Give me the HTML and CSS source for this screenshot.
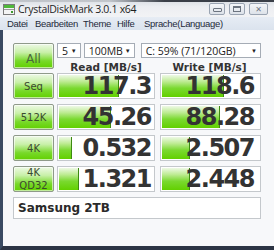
FILE: index.html
```html
<!DOCTYPE html>
<html>
<head>
<meta charset="utf-8">
<link rel="stylesheet" href="styles.css">
</head>
<body>
<div class="window">
  <div class="titlebar">
    <svg class="appicon" width="12" height="11" viewBox="0 0 12 11">
      <rect x="0.5" y="0.5" width="11" height="10" fill="#f4f4f4" stroke="#7a7a7a"/>
      <rect x="1" y="1" width="10" height="3" fill="#4fb83a"/>
      <rect x="1" y="5" width="10" height="1" fill="#9a9a9a"/>
      <rect x="8" y="7" width="2" height="2" fill="#3c9a2c"/>
    </svg>
    <span class="title">CrystalDiskMark 3.0.1 x64</span>
    <div class="controls">
      <div class="cbtn"><span class="min"></span></div>
      <div class="cbtn"><span class="max"></span></div>
      <div class="cbtn close"><span class="x">✕</span></div>
    </div>
  </div>
  <div class="menubar">
    <span class="mi m1">Datei</span>
    <span class="mi m2">Bearbeiten</span>
    <span class="mi m3">Theme</span>
    <span class="mi m4">Hilfe</span>
    <span class="mi">Sprache(Language)</span>
  </div>
  <div class="client">
    <div class="grid">
      <div class="btn all">All</div>
      <div class="combos">
        <div class="combo c1"><span>5</span><i>▼</i></div>
        <div class="combo c2"><span>100MB</span><i>▼</i></div>
        <div class="combo c3"><span>C: 59% (71/120GB)</span><i>▼</i></div>
      </div>
      <div class="head">Read [MB/s]</div>
      <div class="head">Write [MB/s]</div>

      <div class="btn">Seq</div>
      <div class="cell"><div class="bar" style="width:62%"></div><span class="val">117.3</span></div>
      <div class="cell w"><div class="bar" style="width:63%"></div><span class="val">118.6</span></div>

      <div class="btn">512K</div>
      <div class="cell"><div class="bar" style="width:54%"></div><span class="val">45.26</span></div>
      <div class="cell w"><div class="bar" style="width:59%"></div><span class="val">88.28</span></div>

      <div class="btn">4K</div>
      <div class="cell"><div class="bar" style="width:14%"></div><span class="val">0.532</span></div>
      <div class="cell w"><div class="bar" style="width:28%"></div><span class="val">2.507</span></div>

      <div class="btn two">4K<br>QD32</div>
      <div class="cell"><div class="bar" style="width:21%"></div><span class="val">1.321</span></div>
      <div class="cell w"><div class="bar" style="width:28%"></div><span class="val">2.448</span></div>

      <div class="comment">Samsung 2TB</div>
    </div>
  </div>
</div>
</body>
</html>
```

FILE: styles.css
```css
html, body {
  margin: 0;
  padding: 0;
  width: 274px;
  height: 250px;
  overflow: hidden;
}
.window {
  width: 274px;
  height: 250px;
  display: flex;
  flex-direction: column;
  background: #eef2f7;
  font-family: "Open Sans", "DejaVu Sans", sans-serif;
}
.titlebar {
  height: 17px;
  flex: none;
  display: flex;
  align-items: center;
  background:
    linear-gradient(to right, rgba(40,44,52,0.15) 0%, rgba(40,44,52,0.15) 40%, #3a3f48 60%) top / 100% 2px no-repeat,
    linear-gradient(#d9dde3, #eceef2 40%, #f2f3f5);
  box-sizing: border-box;
  padding-left: 3px;
}
.appicon { flex: none; margin-top: 1px; }
.title {
  margin-left: 3px;
  font-size: 10.5px;
  color: #1e1e1e;
  letter-spacing: -0.3px;
  white-space: nowrap;
}
.controls {
  margin-left: auto;
  margin-right: 6px;
  display: flex;
  gap: 4px;
  align-self: flex-start;
  margin-top: 3px;
}
.cbtn {
  box-sizing: border-box;
  width: 16px;
  height: 12px;
  border: 1px solid #9aa4b2;
  border-radius: 2px;
  background: linear-gradient(#f4f6f9, #dde2e9);
  display: flex;
  align-items: center;
  justify-content: center;
}
.cbtn.close { width: 19px; }
.min { width: 7px; height: 2px; border: 1px solid #6c7480; border-radius: 1px; margin-top: 2px; }
.max { width: 6px; height: 3px; border: 1px solid #6c7480; border-top-width: 2px; }
.x { font-size: 8px; color: #707886; line-height: 1; }
.menubar {
  height: 13px;
  flex: none;
  display: flex;
  align-items: center;
  background: linear-gradient(#e6ecf4, #dbe3ee);
  padding-left: 7px;
  font-family: "Liberation Sans", Arial, sans-serif;
  font-size: 9.5px;
  color: #1e2a3a;
  overflow: hidden;
}
.mi { white-space: nowrap; letter-spacing: -0.3px; flex: none; }
.m1 { width: 28px; }
.m2 { width: 48px; }
.m3 { width: 34px; }
.m4 { width: 27px; }
.client {
  flex: 1;
  background: #f7f8fa;
  border-left: 3px solid #3a4a62;
  border-bottom: 4px solid #2c3444;
  padding: 13px 0 0 10px;
}
.grid {
  display: grid;
  grid-template-columns: 41px 98px 103px;
  grid-template-rows: 16px 14px 31px 31px 31px 31px 22px;
  column-gap: 3px;
  row-gap: 0;
}
.btn {
  box-sizing: border-box;
  border: 1px solid #8f9a8a;
  border-radius: 2px;
  background: linear-gradient(#eef9e6 0%, #c8f0a8 35%, #78d92a 70%, #62d000 100%);
  box-shadow: inset 0 0 0 1px rgba(255,255,255,0.6);
  display: flex;
  align-items: center;
  justify-content: center;
  font-family: "DejaVu Sans", sans-serif;
  font-size: 10px;
  color: #3b4a2e;
  text-align: center;
  margin-bottom: 5px;
}
.btn.all {
  grid-row: 1 / 3;
  font-size: 12px;
  color: #4a6a3a;
  padding-top: 6px;
  margin-bottom: 4px;
}
.btn.two { line-height: 13px; }
.combos {
  grid-column: 2 / 4;
  display: flex;
  gap: 3px;
  height: 15px;
}
.combo {
  box-sizing: border-box;
  height: 15px;
  border: 1px solid #a5acb5;
  background: #fff;
  display: flex;
  align-items: center;
  padding: 0 3px 0 4px;
  font-family: "Open Sans", sans-serif;
  font-size: 10.5px;
  color: #1a1a1a;
}
.combo i { font-style: normal; font-size: 6px; margin-left: auto; color: #222; }
.c1 { width: 24px; }
.c2 { width: 52px; }
.c3 { width: 123px; margin-left: 3px; }
.head {
  font-family: "DejaVu Sans", sans-serif;
  font-weight: bold;
  font-size: 10.5px;
  color: #333;
  text-align: center;
  line-height: 14px;
  padding-top: 1px;
}
.cell {
  position: relative;
  box-sizing: border-box;
  border: 1px solid #c4c8cc;
  background: #fff;
  margin-bottom: 5px;
  display: flex;
  align-items: center;
  justify-content: flex-end;
  overflow: hidden;
}
.cell.w { margin-left: 2px; }
.bar {
  position: absolute;
  left: 1px;
  top: 1px;
  bottom: 1px;
  box-sizing: border-box;
  border-right: 1px solid #3d8a12;
  background: linear-gradient(#eef9e6 0%, #bdeb92 30%, #7ad930 60%, #62d000 100%);
}
.val {
  position: relative;
  font-family: "DejaVu Sans", sans-serif;
  font-weight: bold;
  font-size: 24px;
  color: #333;
  padding-right: 3px;
  letter-spacing: -1.5px;
}
.cell.w .val { padding-right: 6px; }
.comment {
  grid-column: 1 / 4;
  box-sizing: border-box;
  border: 1px solid #c4c8cc;
  background: #fff;
  font-family: "DejaVu Sans", sans-serif;
  font-weight: bold;
  font-size: 12px;
  color: #2a2a2a;
  padding-left: 4px;
  line-height: 20px;
}
```
